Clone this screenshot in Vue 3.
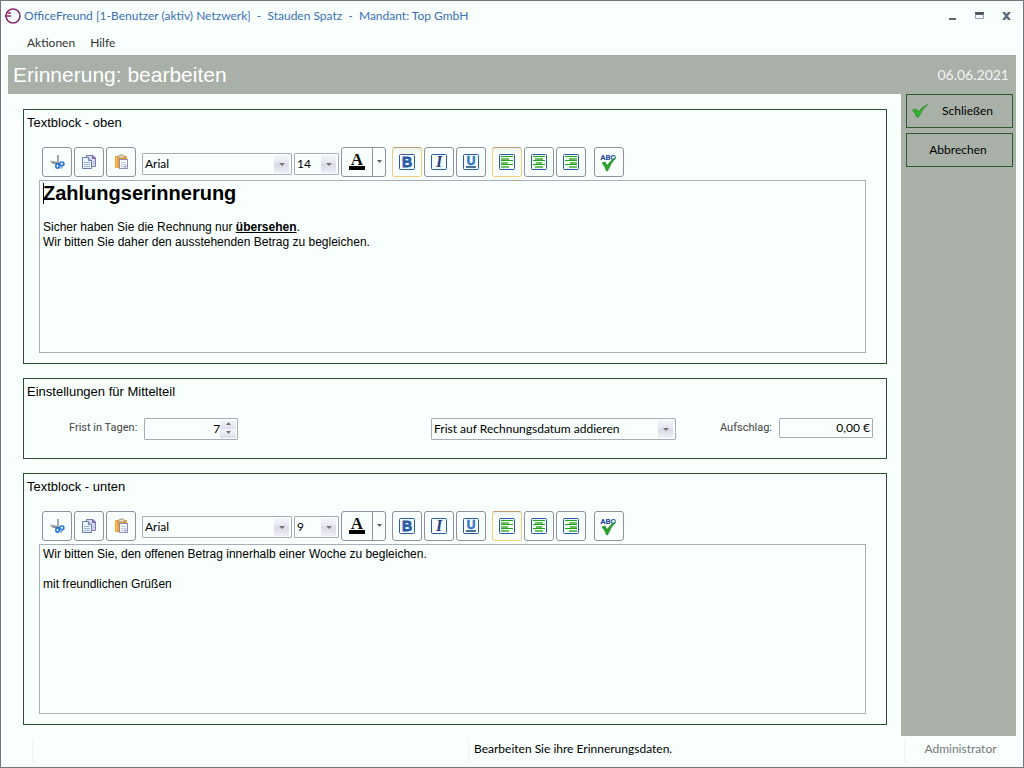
<script setup>
import { ref, reactive } from 'vue'

const days = ref(7)
const surcharge = ref('0,00 €')
const base = ref('Frist auf Rechnungsdatum addieren')

const blocks = reactive([
  { id: 'oben', title: 'Textblock - oben', font: 'Arial', size: '14', bold: true, align: 'left' },
  { id: 'unten', title: 'Textblock - unten', font: 'Arial', size: '9', bold: false, align: 'left' }
])

const alignments = [
  { id: 'left', label: 'Linksbündig', lines: [[2, 12], [2, 8], [2, 12], [2, 7], [2, 12], [2, 8]] },
  { id: 'center', label: 'Zentriert', lines: [[2, 12], [4, 8], [2, 12], [5, 6], [2, 12], [4, 8]] },
  { id: 'right', label: 'Rechtsbündig', lines: [[2, 12], [6, 8], [2, 12], [7, 7], [2, 12], [6, 8]] }
]
</script>

<template>
  <div class="window">
    <header class="titlebar">
      <svg class="logo" width="16" height="16" viewBox="0 0 16 16" aria-hidden="true">
        <circle cx="8" cy="8" r="7" fill="none" stroke="#8a2a72" stroke-width="1.6" />
        <path d="M0 8H6M2.500 5H6" stroke="#8a2a72" stroke-width="1.400" />
      </svg>
      <span class="caption">OfficeFreund [1-Benutzer (aktiv) Netzwerk]&nbsp; -&nbsp; Stauden Spatz&nbsp; -&nbsp; Mandant: Top GmbH</span>
      <div class="controls">
        <button type="button" aria-label="Minimieren">
          <svg width="11" height="10" viewBox="0 0 11 10"><path d="M2 7H9V9H2Z" fill="#5d6675" /></svg>
        </button>
        <button type="button" aria-label="Maximieren">
          <svg width="11" height="10" viewBox="0 0 11 10"><path d="M1 1H10V4H1Z" fill="#505866" /><path d="M1.500 3V7.500H9.500V3" fill="none" stroke="#8c9cba" /></svg>
        </button>
        <button type="button" aria-label="Fenster schließen">
          <svg width="11" height="10" viewBox="0 0 11 10"><path d="M1 1H4L5.500 3L7 1H10L7 5L10 9H7L5.500 7L4 9H1L4 5Z" fill="#5e6a80" /></svg>
        </button>
      </div>
    </header>

    <nav class="menu">
      <a href="#">Aktionen</a>
      <a href="#">Hilfe</a>
    </nav>

    <div class="heading">
      <h1>Erinnerung: bearbeiten</h1>
      <time datetime="2021-06-06">06.06.2021</time>
    </div>

    <div class="body">
      <main class="content">
        <template v-for="block in blocks" :key="block.id">
          <section class="panel text-panel" :class="block.id" :aria-labelledby="'title-' + block.id">
            <h2 :id="'title-' + block.id">{{ block.title }}</h2>
            <div class="toolbar" role="toolbar">
              <div class="group">
                <button type="button" class="tool" aria-label="Ausschneiden">
                  <svg width="16" height="16" viewBox="0 0 16 16">
                    <path d="M9 1V9" stroke="#8d9299" stroke-width="1.600" />
                    <path d="M1.500 7.500L10 9" stroke="#a4a9ae" stroke-width="2" />
                    <path d="M3 9L10 9.500" stroke="#6d747d" />
                    <ellipse cx="8.500" cy="12" rx="1.700" ry="2.100" fill="none" stroke="#2675d2" stroke-width="1.600" />
                    <ellipse cx="12.800" cy="9.800" rx="2.100" ry="1.800" fill="none" stroke="#2675d2" stroke-width="1.600" />
                    <circle cx="12" cy="13" r="1.200" fill="none" stroke="#5593dc" />
                  </svg>
                </button>
                <button type="button" class="tool" aria-label="Kopieren">
                  <svg width="16" height="16" viewBox="0 0 16 16">
                    <path d="M5.500 1.500H12L14.500 4V12.500H5.500Z" fill="#d9dcf0" stroke="#7d76ac" />
                    <path d="M11.500 1V4.500H15" fill="#8571b8" stroke="#7667ac" />
                    <path d="M1.500 3.500H7.500L10.500 6.500V14.500H1.500Z" fill="#edf3fb" stroke="#6782a8" />
                    <path d="M7.500 3.500V6.500H10.500" fill="#cbd7ea" stroke="#6782a8" />
                    <path d="M3 8.500H9M3 10.500H9M3 12.500H9M12 7.500H13.500M12 9.500H13.500" stroke="#a2b6d5" />
                  </svg>
                </button>
                <button type="button" class="tool" aria-label="Einfügen">
                  <svg width="16" height="16" viewBox="0 0 16 16">
                    <rect x="2" y="2" width="12" height="12" rx="1" fill="#f4a02c" />
                    <path d="M3.500 3V13" stroke="#ffc568" />
                    <path d="M5 4V2H7V1H10V2H12V4Z" fill="#f1e3c7" stroke="#a9855c" stroke-width=".8" />
                    <rect x="6.500" y="5.500" width="8" height="9" fill="#f4f6fb" stroke="#8f91b4" />
                    <path d="M8 8.500H13M8 10.500H13M8 12.500H11" stroke="#c3cadd" />
                    <path d="M12 14V12H14" fill="none" stroke="#8f91b4" />
                  </svg>
                </button>
              </div>
              <div class="group fonts">
                <span class="combo face">
                  <select v-model="block.font" aria-label="Schriftart">
                    <option>Arial</option>
                    <option>Tahoma</option>
                  </select>
                  <i class="drop"></i>
                </span>
                <span class="combo size">
                  <select v-model="block.size" aria-label="Schriftgröße">
                    <option>9</option>
                    <option>14</option>
                  </select>
                  <i class="drop"></i>
                </span>
                <span class="split">
                  <button type="button" aria-label="Schriftfarbe">
                    <svg width="20" height="24" viewBox="0 0 20 24">
                      <text x="10" y="15" text-anchor="middle" font-family="Liberation Serif, serif" font-size="17" font-weight="bold" fill="#111">A</text>
                      <rect x="2" y="16" width="16" height="4" fill="#000" />
                    </svg>
                  </button>
                  <button type="button" class="more" aria-label="Weitere Farben">
                    <svg width="7" height="4" viewBox="0 0 7 4"><path d="M1 0H6L3.500 3Z" fill="#5b6068" /></svg>
                  </button>
                </span>
              </div>
              <div class="group">
                <button type="button" class="tool" :class="{ active: block.bold }" aria-label="Fett" @click="block.bold = !block.bold">
                  <svg width="24" height="24" viewBox="-4 -4 24 24">
                    <rect x=".5" y=".5" width="15" height="15" rx="1" fill="#f7fcff" stroke="#2c58a8" />
                    <text x="8" y="13" text-anchor="middle" font-family="Liberation Sans, sans-serif" font-size="14" font-weight="bold" fill="#2868b4" stroke="#1d529b" stroke-width=".8">B</text>
                  </svg>
                </button>
                <button type="button" class="tool" aria-label="Kursiv">
                  <svg width="24" height="24" viewBox="-4 -4 24 24">
                    <rect x=".5" y=".5" width="15" height="15" rx="1" fill="#f7fcff" stroke="#2c58a8" />
                    <text x="8" y="13" text-anchor="middle" font-family="Liberation Serif, serif" font-size="16" font-weight="bold" font-style="italic" fill="#273f80">I</text>
                  </svg>
                </button>
                <button type="button" class="tool" aria-label="Unterstrichen">
                  <svg width="24" height="24" viewBox="-4 -4 24 24">
                    <rect x=".5" y=".5" width="15" height="15" rx="1" fill="#f7fcff" stroke="#2c58a8" />
                    <text x="8" y="11" text-anchor="middle" font-family="Liberation Sans, sans-serif" font-size="12" font-weight="bold" fill="#2d78c4" stroke="#2d78c4" stroke-width=".5">U</text>
                    <path d="M3 13H13" stroke="#49739f" stroke-width="2" />
                  </svg>
                </button>
              </div>
              <div class="group">
                <button
                  v-for="a in alignments"
                  :key="a.id"
                  type="button"
                  class="tool"
                  :class="{ active: block.align === a.id }"
                  :aria-label="a.label"
                  @click="block.align = a.id"
                >
                  <svg width="16" height="16" viewBox="0 0 16 16">
                    <rect x=".5" y=".5" width="15" height="15" rx="1" fill="#f3fff3" stroke="#2c58a8" />
                    <template v-for="(line, i) in a.lines" :key="i">
                      <rect :x="line[0]" :y="2 + i * 2" :width="line[1]" :height="i % 2 ? 2 : 1" :fill="i % 2 ? '#6fbf6a' : '#1fa321'" />
                    </template>
                  </svg>
                </button>
              </div>
              <button type="button" class="tool spell" aria-label="Rechtschreibung">
                <svg width="20" height="22" viewBox="0 -2 20 22">
                  <text x="9" y="7" text-anchor="middle" font-family="Roboto, sans-serif" font-size="8" font-weight="bold" fill="#1b459e">ABC</text>
                  <path d="M3 10L6 9L8 12.500Q11 8 17 4Q12 10 8.500 18H7.500Q6 13 3 10Z" fill="#27a52a" stroke="#177b1a" stroke-width=".6" />
                </svg>
              </button>
            </div>
            <div v-if="block.id === 'oben'" class="editor" contenteditable="true" role="textbox" aria-multiline="true" :aria-labelledby="'title-' + block.id">
              <p class="big"><span class="caret"></span>Zahlungserinnerung</p>
              <p><br></p>
              <p>Sicher haben Sie die Rechnung nur <b><u>übersehen</u></b>.</p>
              <p>Wir bitten Sie daher den ausstehenden Betrag zu begleichen.</p>
            </div>
            <div v-else class="editor" contenteditable="true" role="textbox" aria-multiline="true" :aria-labelledby="'title-' + block.id">
              <p>Wir bitten Sie, den offenen Betrag innerhalb einer Woche zu begleichen.</p>
              <p><br></p>
              <p>mit freundlichen Grüßen</p>
            </div>
          </section>

          <section v-if="block.id === 'oben'" class="panel settings" aria-labelledby="title-mitte">
            <h2 id="title-mitte">Einstellungen für Mittelteil</h2>
            <div class="fields">
              <div class="field">
                <label for="days">Frist in Tagen:</label>
                <span class="spinner">
                  <input id="days" v-model="days" type="text" inputmode="numeric">
                  <span class="steps">
                    <button type="button" aria-label="Mehr" @click="days++">
                      <svg width="7" height="4" viewBox="0 0 7 4"><path d="M1 3H6L3.500 0Z" fill="#77746c" /></svg>
                    </button>
                    <button type="button" aria-label="Weniger" @click="days--">
                      <svg width="7" height="4" viewBox="0 0 7 4"><path d="M1 0H6L3.500 3Z" fill="#77746c" /></svg>
                    </button>
                  </span>
                </span>
              </div>
              <span class="combo basis">
                <select v-model="base" aria-label="Fristbasis">
                  <option>Frist auf Rechnungsdatum addieren</option>
                </select>
                <i class="drop"></i>
              </span>
              <div class="field surcharge">
                <label for="surcharge">Aufschlag:</label>
                <input id="surcharge" v-model="surcharge" type="text">
              </div>
            </div>
          </section>
        </template>
      </main>

      <aside class="side">
        <button type="button" class="with-icon">
          <svg width="16" height="14" viewBox="0 0 16 14" aria-hidden="true">
            <path d="M.5 6L4 5L6 8Q10 3 15.500 .5Q10.500 5 7 12.500L5 13.500Q3.500 9 .5 6Z" fill="#2db62a" stroke="#25852a" stroke-width=".7" />
          </svg>
          <span>Schließen</span>
        </button>
        <button type="button">Abbrechen</button>
      </aside>
    </div>

    <footer class="status">
      <span class="cell"></span>
      <span class="cell">Bearbeiten Sie ihre Erinnerungsdaten.</span>
      <span class="cell user">Administrator</span>
    </footer>
  </div>
</template>

<style>
body {
  background: #f8fffd;
}
</style>

<style scoped>
* {
  box-sizing: border-box;
}

.window {
  display: flex;
  flex-direction: column;
  min-height: 100vh;
  padding: 0 7px;
  border: 1px solid #70757f;
  background: #f8fffd;
  color: #000;
  font: 12px/16px Lato, "Open Sans", sans-serif;
}

button,
input,
select {
  margin: 0;
  padding: 0;
  border: 0;
  background: none;
  color: inherit;
  font: inherit;
}

svg {
  display: block;
}

h1,
h2,
p {
  margin: 0;
  font-weight: normal;
}

.titlebar {
  display: flex;
  align-items: center;
  gap: 3px;
  height: 30px;
  margin-left: -3px;
  color: #3b6fb4;
}

.logo {
  flex: none;
}

.controls {
  display: flex;
  gap: 16px;
  margin-left: auto;
  padding-right: 4px;
}

.menu {
  display: flex;
  gap: 15px;
  height: 24px;
  padding: 4px 19px;
}

.menu a {
  color: #333;
  text-decoration: none;
}

.heading {
  display: flex;
  align-items: center;
  justify-content: space-between;
  height: 39px;
  padding: 0 7px 0 5px;
  background: #a9b0a8;
  color: #fff;
}

.heading h1 {
  font: 21px/24px "Liberation Sans", Arial, sans-serif;
}

.heading time {
  color: #f2f4f2;
  font-size: 14px;
}

.body {
  display: flex;
  flex: 1;
}

.content {
  display: flex;
  flex: 1;
  flex-direction: column;
  gap: 14px;
  padding: 15px 14px 11px 15px;
}

.panel {
  display: flex;
  flex-direction: column;
  border: 1px solid #2d5030;
}

.text-panel.oben {
  flex: 255 1 0;
}

.text-panel.unten {
  flex: 252 1 0;
}

.panel h2 {
  padding: 5px 3px 3px;
  font: 13px/16px "Liberation Sans", Arial, sans-serif;
}

.toolbar {
  display: flex;
  align-items: center;
  gap: 6px;
  margin: 13px 18px 3px;
}

.group {
  display: flex;
  gap: 2px;
}

.fonts {
  align-items: center;
}

.tool {
  display: grid;
  place-items: center;
  width: 30px;
  height: 30px;
  border: 1px solid #8f929e;
  border-radius: 3px;
}

.tool.active {
  border-color: #bd9c6c #efcb80 #f4cf7f;
  background: linear-gradient(#eaf3ef, #f8fffd 6px);
}

.spell {
  margin-left: 2px;
}

.combo {
  position: relative;
  height: 22px;
  border: 1px solid #a8aeb8;
  border-radius: 1px;
}

.fonts .combo {
  margin-top: 3px;
}

.combo select {
  width: 100%;
  height: 20px;
  padding: 0 18px 0 2px;
  appearance: none;
}

.drop {
  position: absolute;
  top: 1px;
  right: 2px;
  bottom: 1px;
  width: 15px;
  background: linear-gradient(#f5f6fb, #e2e3ee 50%, #d7d9e6 50%, #eeeff7);
  pointer-events: none;
}

.drop::after {
  position: absolute;
  top: 8px;
  left: 5px;
  border: 3px solid transparent;
  border-top-color: #77746c;
  border-bottom: 0;
  content: "";
}

.face {
  width: 150px;
}

.size {
  width: 45px;
}

.split {
  display: flex;
  width: 45px;
  height: 30px;
  border: 1px solid #8f929e;
  border-radius: 3px;
}

.split button {
  display: grid;
  flex: 1;
  place-items: center;
}

.split .more {
  flex: none;
  width: 13px;
  border-left: 1px solid #8f929e;
}

.editor {
  flex: 1;
  min-height: 120px;
  margin: 0 20px 10px 15px;
  padding: 2px 3px;
  border: 1px solid #a8afb7;
  outline: none;
  font: 12px/15px "Liberation Sans", Arial, sans-serif;
}

.editor p.big {
  position: relative;
  margin-bottom: 1px;
  font-size: 20px;
  font-weight: bold;
  line-height: 21px;
}

.caret {
  position: absolute;
  top: 0;
  left: 0;
  width: 1px;
  height: 21px;
  background: #000;
}

.fields {
  display: flex;
  align-items: flex-start;
  padding: 15px 13px 18px 45px;
}

.field {
  display: flex;
  align-items: flex-start;
  gap: 7px;
}

.field label {
  color: #444;
  font: 11px/20px Roboto, sans-serif;
}

.spinner {
  display: flex;
  width: 94px;
  height: 22px;
  padding: 1px;
  border: 1px solid #a5acb5;
  border-radius: 1px;
}

.spinner input {
  flex: 1;
  min-width: 0;
  text-align: right;
}

.steps {
  display: flex;
  flex-direction: column;
  width: 16px;
}

.steps button {
  display: grid;
  flex: 1;
  place-items: center;
  background: linear-gradient(#f5f6fb, #dcdee9);
}

.basis {
  width: 245px;
  margin-left: auto;
}

.surcharge {
  margin-left: 44px;
}

.surcharge input {
  width: 94px;
  height: 20px;
  padding: 0 2px;
  border: 1px solid #a5acb5;
  border-radius: 1px;
  text-align: right;
}

.side {
  display: flex;
  flex-direction: column;
  gap: 5px;
  width: 115px;
  padding: 0 3px 0 5px;
  background: #a9b0a8;
}

.side button {
  height: 34px;
  border: 1px solid #2d5c30;
  padding-right: 3px;
}

.side .with-icon {
  display: flex;
  align-items: center;
  padding: 0 5px;
}

.with-icon span {
  flex: 1;
  text-align: center;
}

.status {
  display: grid;
  grid-template-columns: 436fr 436fr 112px;
  height: 31px;
  padding: 4px 0 4px 24px;
}

.cell {
  padding: 1px 5px;
  border-left: 1px solid #eef3f1;
  line-height: 16px;
}

.cell.user {
  color: #777;
  text-align: center;
}
</style>
